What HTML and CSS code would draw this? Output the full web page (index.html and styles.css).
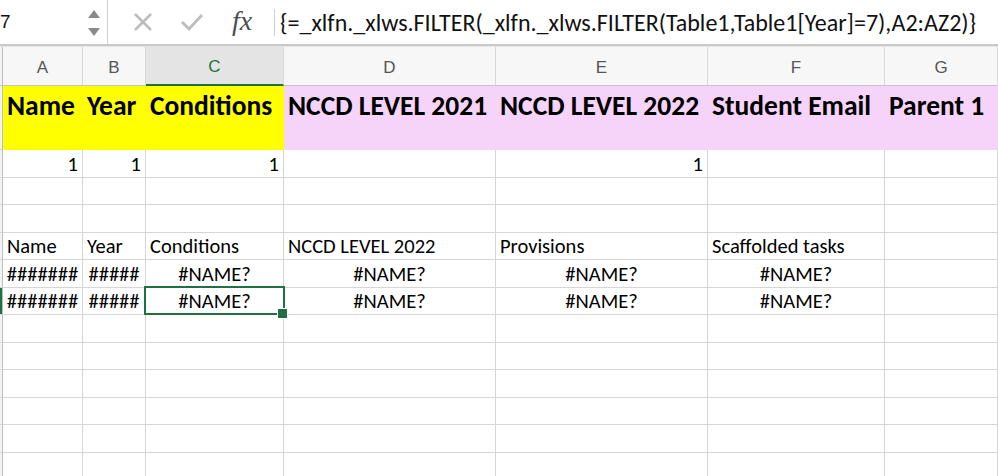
FILE: index.html
```html
<!DOCTYPE html>
<html>
<head>
<meta charset="utf-8">
<link rel="stylesheet" href="styles.css">
</head>
<body>
<div class="formula-bar">
  <div class="namebox">
    <span class="nb-text">7</span>
    <svg class="spinner" width="14" height="28" viewBox="0 0 14 28">
      <polygon points="1,9 7,1 13,9" fill="#8a8a8a"/>
      <polygon points="1,19 13,19 7,27" fill="#8a8a8a"/>
    </svg>
  </div>
  <div class="fb-icons">
    <svg class="ic-x" width="20" height="20" viewBox="0 0 20 20"><path d="M2 2 L18 18 M18 2 L2 18" stroke="#bdbdbd" stroke-width="2.6" fill="none"/></svg>
    <svg class="ic-check" width="24" height="20" viewBox="0 0 24 20"><path d="M2 10 L9 17 L22 3" stroke="#bdbdbd" stroke-width="2.8" fill="none"/></svg>
    <span class="ic-fx">fx</span>
  </div>
  <div class="fb-sep"></div>
  <div class="formula">{=_xlfn._xlws.FILTER(_xlfn._xlws.FILTER(Table1,Table1[Year]=7),A2:AZ2)}</div>
</div>
<div class="sheet">
  <div class="grid">
    <div class="ch rh"></div>
    <div class="ch">A</div>
    <div class="ch">B</div>
    <div class="ch sel">C</div>
    <div class="ch">D</div>
    <div class="ch">E</div>
    <div class="ch">F</div>
    <div class="ch">G</div>

    <div class="c rh tall"></div>
    <div class="c tall hy">Name</div>
    <div class="c tall hy">Year</div>
    <div class="c tall hy">Conditions</div>
    <div class="c tall hp">NCCD LEVEL 2021</div>
    <div class="c tall hp">NCCD LEVEL 2022</div>
    <div class="c tall hp">Student Email</div>
    <div class="c tall hp">Parent 1</div>

    <div class="c rh"></div>
    <div class="c r">1</div>
    <div class="c r">1</div>
    <div class="c r">1</div>
    <div class="c"></div>
    <div class="c r">1</div>
    <div class="c"></div>
    <div class="c"></div>

    <div class="c rh"></div><div class="c"></div><div class="c"></div><div class="c"></div><div class="c"></div><div class="c"></div><div class="c"></div><div class="c"></div>
    <div class="c rh"></div><div class="c"></div><div class="c"></div><div class="c"></div><div class="c"></div><div class="c"></div><div class="c"></div><div class="c"></div>

    <div class="c rh"></div>
    <div class="c">Name</div>
    <div class="c">Year</div>
    <div class="c">Conditions</div>
    <div class="c">NCCD LEVEL 2022</div>
    <div class="c">Provisions</div>
    <div class="c">Scaffolded tasks</div>
    <div class="c"></div>

    <div class="c rh"></div>
    <div class="c hash">#######</div>
    <div class="c hash">#####</div>
    <div class="c m">#NAME?</div>
    <div class="c m">#NAME?</div>
    <div class="c m">#NAME?</div>
    <div class="c m">#NAME?</div>
    <div class="c"></div>

    <div class="c rh selrow"></div>
    <div class="c hash">#######</div>
    <div class="c hash">#####</div>
    <div class="c m active">#NAME?<span class="handle"></span></div>
    <div class="c m">#NAME?</div>
    <div class="c m">#NAME?</div>
    <div class="c m">#NAME?</div>
    <div class="c"></div>

    <div class="c rh"></div><div class="c"></div><div class="c"></div><div class="c"></div><div class="c"></div><div class="c"></div><div class="c"></div><div class="c"></div>
    <div class="c rh"></div><div class="c"></div><div class="c"></div><div class="c"></div><div class="c"></div><div class="c"></div><div class="c"></div><div class="c"></div>
    <div class="c rh"></div><div class="c"></div><div class="c"></div><div class="c"></div><div class="c"></div><div class="c"></div><div class="c"></div><div class="c"></div>
    <div class="c rh"></div><div class="c"></div><div class="c"></div><div class="c"></div><div class="c"></div><div class="c"></div><div class="c"></div><div class="c"></div>
    <div class="c rh"></div><div class="c"></div><div class="c"></div><div class="c"></div><div class="c"></div><div class="c"></div><div class="c"></div><div class="c"></div>
    <div class="c rh"></div><div class="c"></div><div class="c"></div><div class="c"></div><div class="c"></div><div class="c"></div><div class="c"></div><div class="c"></div>
  </div>
</div>
</body>
</html>
```

FILE: styles.css
```css
html, body {
  margin: 0;
  padding: 0;
  background: #ffffff;
  overflow: hidden;
}
body {
  width: 998px;
  height: 476px;
  font-family: Carlito, Lato, "Liberation Sans", sans-serif;
  color: #000;
}
.formula-bar {
  height: 44px;
  display: flex;
  align-items: stretch;
  border-bottom: 2px solid #c9c9c9;
  box-sizing: content-box;
  background: #fff;
}
.namebox {
  width: 108px;
  border-right: 1px solid #cfcfcf;
  display: flex;
  align-items: center;
  justify-content: space-between;
  padding-right: 6px;
  box-sizing: border-box;
}
.nb-text {
  font-family: "Liberation Sans", sans-serif;
  font-size: 19px;
  margin-left: 0;
  color: #111;
}
.spinner {
  margin-top: 1px;
}
.fb-icons {
  display: flex;
  align-items: center;
  width: 164px;
  padding-left: 25px;
  box-sizing: border-box;
}
.ic-x { margin-right: 27px; }
.ic-check { margin-right: 28px; }
.ic-fx {
  font-family: "Liberation Serif", serif;
  font-style: italic;
  font-size: 28px;
  color: #4d4d4d;
  margin-top: -3px;
}
.fb-sep {
  width: 1px;
  background: #d0d0d0;
  margin: 9px 0 8px 2px;
}
.formula {
  display: flex;
  align-items: center;
  padding-left: 5px;
  font-size: 24px;
  white-space: nowrap;
  color: #111;
}
.sheet {
  border-top: 1px solid #e6e6e6;
}
.grid {
  display: grid;
  grid-template-columns: 3px 80px 63px 138px 212px 212px 177px 113px;
  grid-template-rows: 39px 64px;
  grid-auto-rows: 27.5px;
}
.ch {
  background: #f7f7f7;
  border-right: 1px solid #d8d8d8;
  border-bottom: 1px solid #c4c4c4;
  display: flex;
  align-items: center;
  justify-content: center;
  font-family: "Liberation Sans", sans-serif;
  font-size: 17px;
  color: #555;
  box-sizing: border-box;
  padding-top: 3px;
}
.ch.sel {
  background: #e4e4e4;
  color: #1f7145;
  border-bottom: 2px solid #1f7145;
}
.c {
  border-right: 1px solid #d6d6d6;
  border-bottom: 1px solid #d6d6d6;
  box-sizing: border-box;
  font-size: 20.5px;
  padding: 0 4px;
  display: flex;
  align-items: flex-end;
  padding-bottom: 0;
  white-space: nowrap;
  overflow: hidden;
  position: relative;
}
.rh {
  background: #f3f3f3;
  padding: 0;
  border-right: 1px solid #bdbdbd;
}
.selrow {
  background: #1f7145;
}
.tall {
  align-items: flex-start;
  padding-top: 3px;
  font-weight: bold;
  font-size: 27.5px;
}
.hy { background: #ffff00; border-right: none; border-bottom: none; }
.hp { background: #f6d4fa; border-right: none; border-bottom: none; }
.r { justify-content: flex-end; }
.m { justify-content: center; }
.hash { padding: 0 1px 0; justify-content: center; }
.active {
  overflow: visible;
}
.active::before {
  content: "";
  position: absolute;
  left: -2px;
  top: -2px;
  right: -2px;
  bottom: -1px;
  border: 2.5px solid #1f7145;
  pointer-events: none;
}
.handle {
  position: absolute;
  right: -5px;
  bottom: -5px;
  width: 9px;
  height: 9px;
  background: #1f7145;
  border: 1px solid #fff;
  z-index: 2;
}
```
